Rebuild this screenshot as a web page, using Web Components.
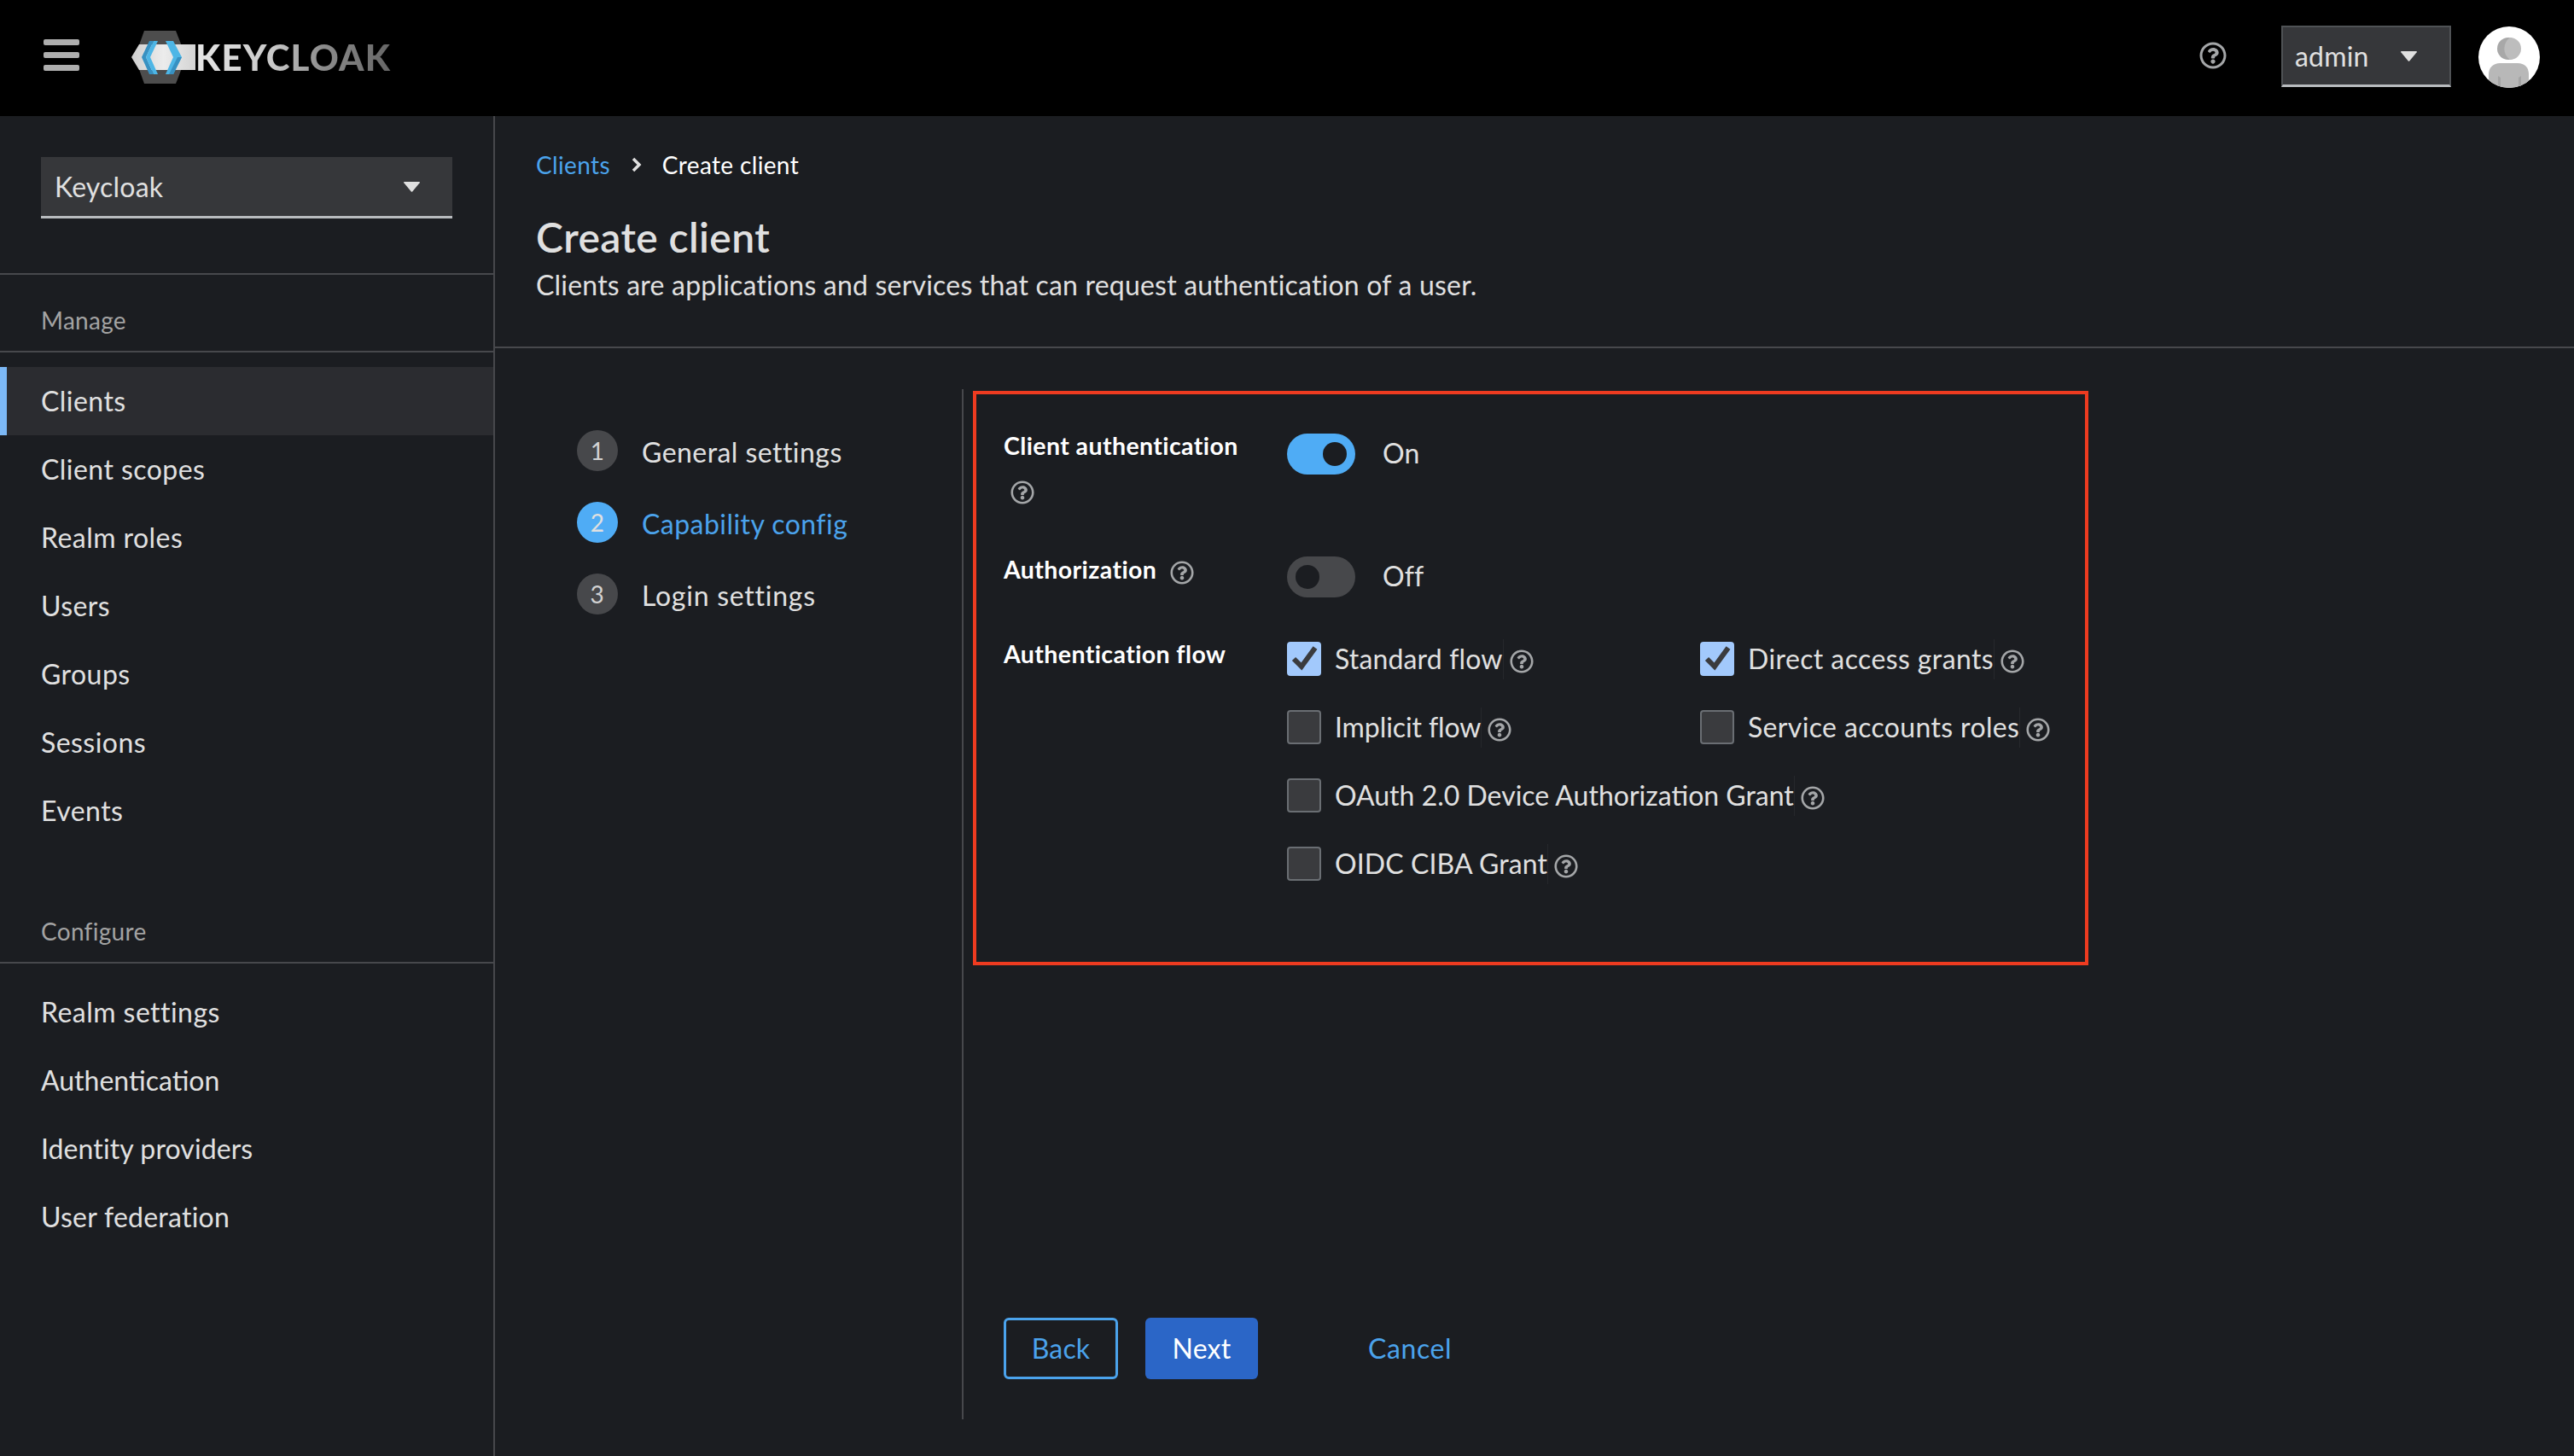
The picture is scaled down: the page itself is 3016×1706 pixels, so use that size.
<!DOCTYPE html>
<html lang="en">
<head>
<meta charset="utf-8">
<title>Keycloak - Create client</title>
<style>
  html, body { margin: 0; height: 100%; background: #1b1d21; }
  body { font-family: "Lato", "Noto Sans", sans-serif; font-size: 32px; color: #e0e0e0; letter-spacing: .2px; }
</style>
</head>
<body>

<kc-app>
  <kc-masthead slot="masthead" user="admin"></kc-masthead>

  <kc-sidebar slot="sidebar" realm="Keycloak">
    <kc-nav-section heading="Manage">
      <kc-nav-item active>Clients</kc-nav-item>
      <kc-nav-item>Client scopes</kc-nav-item>
      <kc-nav-item>Realm roles</kc-nav-item>
      <kc-nav-item>Users</kc-nav-item>
      <kc-nav-item>Groups</kc-nav-item>
      <kc-nav-item>Sessions</kc-nav-item>
      <kc-nav-item>Events</kc-nav-item>
    </kc-nav-section>
    <kc-nav-section heading="Configure">
      <kc-nav-item>Realm settings</kc-nav-item>
      <kc-nav-item style="letter-spacing:0">Authentication</kc-nav-item>
      <kc-nav-item style="letter-spacing:.1px">Identity providers</kc-nav-item>
      <kc-nav-item style="letter-spacing:.25px">User federation</kc-nav-item>
    </kc-nav-section>
  </kc-sidebar>

  <div slot="main">
    <kc-page-header crumb="Clients" current="Create client" heading="Create client">
      Clients are applications and services that can request authentication of a user.
    </kc-page-header>

    <kc-wizard>
      <kc-step slot="steps" number="1">General settings</kc-step>
      <kc-step slot="steps" number="2" current>Capability config</kc-step>
      <kc-step slot="steps" number="3" style="letter-spacing:.75px">Login settings</kc-step>

      <kc-capability-form slot="body">
        <kc-form-row label="Client authentication" wrapped>
          <kc-switch checked>On</kc-switch>
        </kc-form-row>
        <kc-form-row label="Authorization">
          <kc-switch>Off</kc-switch>
        </kc-form-row>
        <kc-form-row label="Authentication flow" nohelp last>
          <kc-flow-grid>
            <kc-checkbox checked style="letter-spacing:.15px">Standard flow</kc-checkbox>
            <kc-checkbox checked style="letter-spacing:.4px">Direct access grants</kc-checkbox>
            <kc-checkbox style="letter-spacing:-.1px">Implicit flow</kc-checkbox>
            <kc-checkbox style="letter-spacing:.35px">Service accounts roles</kc-checkbox>
            <kc-checkbox wide style="letter-spacing:0">OAuth 2.0 Device Authorization Grant</kc-checkbox>
            <kc-checkbox wide style="letter-spacing:.1px">OIDC CIBA Grant</kc-checkbox>
          </kc-flow-grid>
        </kc-form-row>
      </kc-capability-form>

      <kc-button slot="actions" variant="secondary">Back</kc-button>
      <kc-button slot="actions" variant="primary">Next</kc-button>
      <kc-button slot="actions" variant="link" style="letter-spacing:.6px">Cancel</kc-button>
    </kc-wizard>
  </div>
</kc-app>

<script>
const HELP_PATH = 'M256 8C119.043 8 8 119.083 8 256c0 136.997 111.043 248 248 248s248-111.003 248-248C504 119.083 392.957 8 256 8zm0 448c-110.532 0-200-89.431-200-200 0-110.495 89.472-200 200-200 110.491 0 200 89.471 200 200 0 110.53-89.431 200-200 200zm107.244-255.2c0 67.052-72.421 68.084-72.421 92.863V300c0 6.627-5.373 12-12 12h-45.647c-6.627 0-12-5.373-12-12v-8.659c0-35.745 27.1-50.034 47.579-61.516 17.561-9.845 28.324-16.541 28.324-29.579 0-17.246-21.999-28.693-39.784-28.693-23.189 0-33.894 10.977-48.942 29.969-4.057 5.12-11.46 6.071-16.666 2.124l-27.824-21.098c-5.107-3.872-6.251-11.066-2.644-16.363C184.846 131.491 214.94 112 261.794 112c49.071 0 101.45 38.304 101.45 88.8zM298 368c0 23.159-18.841 42-42 42s-42-18.841-42-42 18.841-42 42-42 42 18.841 42 42z'

class KcElement extends HTMLElement {
  constructor() {
    super()
    this.attachShadow({ mode: 'open' }).innerHTML = this.constructor.markup
  }
  attr(name) {
    return this.getAttribute(name) || ''
  }
  fill(id, name) {
    this.shadowRoot.querySelector(`#${id}`).textContent = this.attr(name)
  }
}

class KcApp extends KcElement {
  static markup = `
    <style>
      :host { display: grid; grid-template-columns: 580px 1fr; grid-template-rows: 136px 1fr; height: 1706px; background: #1b1d21; }
      .masthead { grid-column: span 2; }
      .main { min-width: 0; }
    </style>
    <div class="masthead"><slot name="masthead"></slot></div>
    <slot name="sidebar"></slot>
    <div class="main"><slot name="main"></slot></div>
  `
}

class KcHelpIcon extends KcElement {
  static markup = `
    <style>
      :host { display: inline-flex; width: 28px; height: 28px; color: #a4a6a8; flex: none; }
      svg { width: 100%; height: 100%; fill: currentColor; }
    </style>
    <svg viewBox="0 0 512 512"><path d="${HELP_PATH}"/></svg>
  `
}

class KcSelect extends KcElement {
  static markup = `
    <style>
      :host { display: flex; align-items: center; justify-content: space-between; box-sizing: border-box; height: 72px; width: 482px;
              padding: 0 38px 0 16px; background: #36373a; border-bottom: 3px solid #b8bbbe; color: #e0e0e0; }
      :host([compact]) { width: 199px; padding: 0 38px 0 14px; border: 2px solid #4f5255; border-bottom: 3px solid #b8bbbe; }
      svg { width: 19px; height: 12px; fill: #e0e0e0; }
    </style>
    <span><slot></slot></span>
    <svg viewBox="0 0 19 12"><path d="M1 0h17q1.500 0 .7 1.200L10.400 11.200q-.9 1-1.800 0L.3 1.200Q-.5 0 1 0z"/></svg>
  `
}

class KcLogo extends KcElement {
  static markup = `
    <style>
      :host { display: flex; align-items: center; height: 62px; }
      svg { width: 75px; height: 62px; flex: none; }
      span { font: 900 42px/1 "Lato", sans-serif; letter-spacing: 1.200px;
             background: linear-gradient(90deg, #e6e6e6 0%, #c8c8c8 40%, #8c8c8c 65%, #666 100%);
             -webkit-background-clip: text; background-clip: text; color: transparent; }
    </style>
    <svg viewBox="0 0 75 62">
      <defs>
        <linearGradient id="band" x1="0" x2="1" y1="0" y2="0">
          <stop offset="0" stop-color="#cfcfcf"/><stop offset=".5" stop-color="#ececec"/><stop offset="1" stop-color="#d4d4d4"/>
        </linearGradient>
      </defs>
      <polygon points="15,0 52,0 64,31 52,62 15,62 4,31" fill="#4d4d4d"/>
      <polygon points="0,31 9,16 75,16 75,46 9,46" fill="url(#band)"/>
      <polygon points="12,31 21,12 26,12 17,31 26,51 21,51" fill="#3791c2"/>
      <polygon points="21,12 31,12 22,31 31,51 21,51 26,51 17,31 26,12" fill="#4db6e6"/>
      <polygon points="40,12 49,12 59,31 49,51 40,51 49,31" fill="#4db6e6"/>
      <polygon points="49,31 59,31 49,51 44,51 54,31" fill="#3791c2"/>
    </svg>
    <span>KEYCLOAK</span>
  `
}

class KcAvatar extends KcElement {
  static markup = `
    <style>
      :host { display: block; width: 72px; height: 72px; }
      svg { display: block; }
    </style>
    <svg width="72" height="72" viewBox="0 0 72 72">
      <defs><clipPath id="round"><circle cx="36" cy="36" r="36"/></clipPath></defs>
      <circle cx="36" cy="36" r="36" fill="#fff"/>
      <g clip-path="url(#round)">
        <circle cx="35" cy="26" r="13" fill="#a8a8a8"/>
        <path d="M37 13a13 13 0 0 1 0 26a16 16 0 0 1 0-26z" fill="#bdbdbd"/>
        <path d="M12 72V56C12 48 18 43 25 43H46C54 43 59 48 59 56V72Z" fill="#b8b8b8"/>
        <path d="M26 72V60l-3-2v14zM47 72V60l3-2v14z" fill="#a4a4a4"/>
      </g>
    </svg>
  `
}

class KcMasthead extends KcElement {
  static markup = `
    <style>
      :host { display: flex; align-items: center; height: 136px; box-sizing: border-box; background: #000; padding: 0 40px 0 51px; }
      .burger { display: flex; flex-direction: column; gap: 8px; width: 42px; margin-top: -7px; }
      .burger i { display: block; height: 7px; background: #aeaeae; border-radius: 2px; }
      kc-logo { margin-left: 61px; margin-top: -2px; }
      .tools { display: flex; align-items: center; margin-left: auto; }
      kc-help-icon { width: 32px; height: 32px; margin-right: 64px; margin-top: -6px; }
      kc-select { margin-top: -4px; }
      kc-avatar { margin-left: 32px; margin-top: -2px; }
    </style>
    <div class="burger"><i></i><i></i><i></i></div>
    <kc-logo></kc-logo>
    <div class="tools">
      <kc-help-icon></kc-help-icon>
      <kc-select compact><span id="user"></span></kc-select>
      <kc-avatar></kc-avatar>
    </div>
  `
  connectedCallback() {
    this.fill('user', 'user')
  }
}

class KcSidebar extends KcElement {
  static markup = `
    <style>
      :host { display: block; box-sizing: border-box; width: 580px; border-right: 2px solid #47484c; background: #1b1d21; }
      .realm { padding: 48px 48px 64px; border-bottom: 2px solid #47484c; }
    </style>
    <div class="realm"><kc-select><span id="realm"></span></kc-select></div>
    <slot></slot>
  `
  connectedCallback() {
    this.fill('realm', 'realm')
  }
}

class KcNavSection extends KcElement {
  static markup = `
    <style>
      :host { display: block; letter-spacing: .45px; }
      :host(:not(:first-of-type)) { margin-top: 48px; }
      h2 { margin: 0 0 17px; padding: 35px 48px 18px; font: 400 28px/36px "Lato", sans-serif; letter-spacing: .3px; color: #a3a3a3; border-bottom: 2px solid #47484c; }
    </style>
    <h2 id="heading"></h2>
    <slot></slot>
  `
  connectedCallback() {
    this.fill('heading', 'heading')
  }
}

class KcNavItem extends KcElement {
  static markup = `
    <style>
      :host { display: flex; align-items: center; height: 80px; padding: 0 0 2px 48px; box-sizing: border-box; color: #e0e0e0; }
      :host([active]) { background: #2b2c30; box-shadow: inset 8px 0 0 #7cb8f5; }
    </style>
    <slot></slot>
  `
}

class KcPageHeader extends KcElement {
  static markup = `
    <style>
      :host { display: block; box-sizing: border-box; height: 272px; padding: 37px 48px 0; border-bottom: 2px solid #47484c; }
      nav { display: flex; align-items: center; font-size: 28px; line-height: 40px; color: #fff; letter-spacing: .35px; }
      a { color: #4ba3ec; }
      svg { width: 12px; height: 18px; margin: 0 24px 0 25px; }
      h1 { margin: 33px 0 0; font: 600 48px/64px "Lato", sans-serif; letter-spacing: .4px; color: #e0e0e0; }
      p { margin: 2px 0 0; line-height: 44px; color: #e0e0e0; }
    </style>
    <nav>
      <a id="crumb"></a>
      <svg viewBox="0 0 12 18"><polyline points="2,2 9,9 2,16" fill="none" stroke="#e0e0e0" stroke-width="3.500"/></svg>
      <span id="current"></span>
    </nav>
    <h1 id="heading"></h1>
    <p><slot></slot></p>
  `
  connectedCallback() {
    this.fill('crumb', 'crumb')
    this.fill('current', 'current')
    this.fill('heading', 'heading')
  }
}

class KcWizard extends KcElement {
  static markup = `
    <style>
      :host { display: grid; grid-template-columns: 547px 1fr; height: 1207px; margin-top: 48px; }
      .steps { display: flex; flex-direction: column; gap: 36px; padding: 48px 0 0 96px; letter-spacing: .45px; }
      .content { display: flex; flex-direction: column; justify-content: space-between; border-left: 2px solid #47484c; }
      .body { padding: 2px 0 0 11px; }
      .actions { display: flex; align-items: center; gap: 32px; padding: 0 0 47px 47px; }
    </style>
    <div class="steps"><slot name="steps"></slot></div>
    <div class="content">
      <div class="body"><slot name="body"></slot></div>
      <div class="actions"><slot name="actions"></slot></div>
    </div>
  `
}

class KcStep extends KcElement {
  static markup = `
    <style>
      :host { display: flex; align-items: center; gap: 28px; height: 48px; color: #e0e0e0; }
      :host([current]) { color: #4ba3ec; }
      b { display: grid; place-items: center; width: 48px; height: 48px; border-radius: 50%; background: #47484b; color: #d2d2d2; font: 400 28px/1 "Lato", sans-serif; }
      :host([current]) b { background: #4facf5; color: #e0e0e0; }
      span { padding-top: 2px; }
    </style>
    <b id="number"></b>
    <span><slot></slot></span>
  `
  connectedCallback() {
    this.fill('number', 'number')
  }
}

class KcCapabilityForm extends KcElement {
  static markup = `
    <style>
      :host { display: block; box-sizing: border-box; width: 1307px; height: 673px; padding: 46px 32px 0; border: 4px solid #ee3b20; }
    </style>
    <slot></slot>
  `
}

class KcFormRow extends KcElement {
  static markup = `
    <style>
      :host { display: grid; grid-template-columns: 332px 1fr; margin-bottom: 52px; }
      :host([last]) { margin-bottom: 0; }
      .label { display: flex; flex-wrap: wrap; align-items: center; align-content: flex-start; column-gap: 16px; width: 300px; font-weight: 700; font-size: 28.500px; letter-spacing: .4px; line-height: 32px; color: #fff; }
      .label span { margin-top: -2px; padding-bottom: 2px; }
      :host([wrapped]) .label { row-gap: 18px; padding-bottom: 9px; }
      :host([wrapped]) kc-help-icon { margin-left: 8px; }
      :host([nohelp]) kc-help-icon { display: none; }
      kc-help-icon { margin-top: 5px; }
    </style>
    <div class="label"><span id="label"></span><kc-help-icon></kc-help-icon></div>
    <div><slot></slot></div>
  `
  connectedCallback() {
    this.fill('label', 'label')
  }
}

class KcSwitch extends KcElement {
  static markup = `
    <style>
      :host { display: flex; align-items: center; gap: 32px; height: 48px; color: #e0e0e0; }
      .track { display: flex; align-items: center; width: 80px; height: 48px; border-radius: 24px; background: #47484b; padding: 0 10px; box-sizing: border-box; }
      .track i { display: block; width: 28px; height: 28px; border-radius: 50%; background: #1b1d21; }
      :host([checked]) .track { background: #4facf5; justify-content: flex-end; }
      span { padding-bottom: 3px; }
    </style>
    <div class="track"><i></i></div>
    <span><slot></slot></span>
  `
}

class KcFlowGrid extends KcElement {
  static markup = `
    <style>
      :host { display: grid; grid-template-columns: 484px 1fr; row-gap: 40px; }
    </style>
    <slot></slot>
  `
}

class KcCheckbox extends KcElement {
  static markup = `
    <style>
      :host { display: flex; align-items: center; height: 40px; color: #e0e0e0; }
      :host([wide]) { grid-column: span 2; }
      .box { display: block; box-sizing: border-box; width: 40px; height: 40px; margin-right: 16px; border-radius: 4px; background: #3a3b3e; border: 2px solid #6a6e73; flex: none; }
      .box svg { display: none; }
      :host([checked]) .box { background: #a2c9fc; border: 0; }
      :host([checked]) .box svg { display: block; }
      .text { display: flex; align-items: center; height: 47px; padding-bottom: 2px; box-sizing: border-box; border-right: 1px solid #26282c; white-space: nowrap; }
      kc-help-icon { margin: 6px 0 0 7px; }
    </style>
    <span class="box"><svg width="40" height="40" viewBox="0 0 40 40"><polyline points="8,20 17,29 33,7" fill="none" stroke="#3a3b3e" stroke-width="6"/></svg></span>
    <span class="text"><slot></slot></span>
    <kc-help-icon></kc-help-icon>
  `
}

class KcButton extends KcElement {
  static markup = `
    <style>
      :host { display: flex; align-items: center; justify-content: center; box-sizing: border-box; height: 72px; padding: 0 32px 2px; border-radius: 6px; }
      :host([variant=secondary]) { width: 134px; border: 3px solid #4ba3ec; color: #4ba3ec; }
      :host([variant=primary]) { width: 132px; background: #2b66c7; color: #fff; }
      :host([variant=link]) { color: #4ba3ec; margin-left: 65px; }
    </style>
    <slot></slot>
  `
}

customElements.define('kc-app', KcApp)
customElements.define('kc-help-icon', KcHelpIcon)
customElements.define('kc-select', KcSelect)
customElements.define('kc-logo', KcLogo)
customElements.define('kc-avatar', KcAvatar)
customElements.define('kc-masthead', KcMasthead)
customElements.define('kc-sidebar', KcSidebar)
customElements.define('kc-nav-section', KcNavSection)
customElements.define('kc-nav-item', KcNavItem)
customElements.define('kc-page-header', KcPageHeader)
customElements.define('kc-wizard', KcWizard)
customElements.define('kc-step', KcStep)
customElements.define('kc-capability-form', KcCapabilityForm)
customElements.define('kc-form-row', KcFormRow)
customElements.define('kc-switch', KcSwitch)
customElements.define('kc-flow-grid', KcFlowGrid)
customElements.define('kc-checkbox', KcCheckbox)
customElements.define('kc-button', KcButton)
</script>
</body>
</html>
